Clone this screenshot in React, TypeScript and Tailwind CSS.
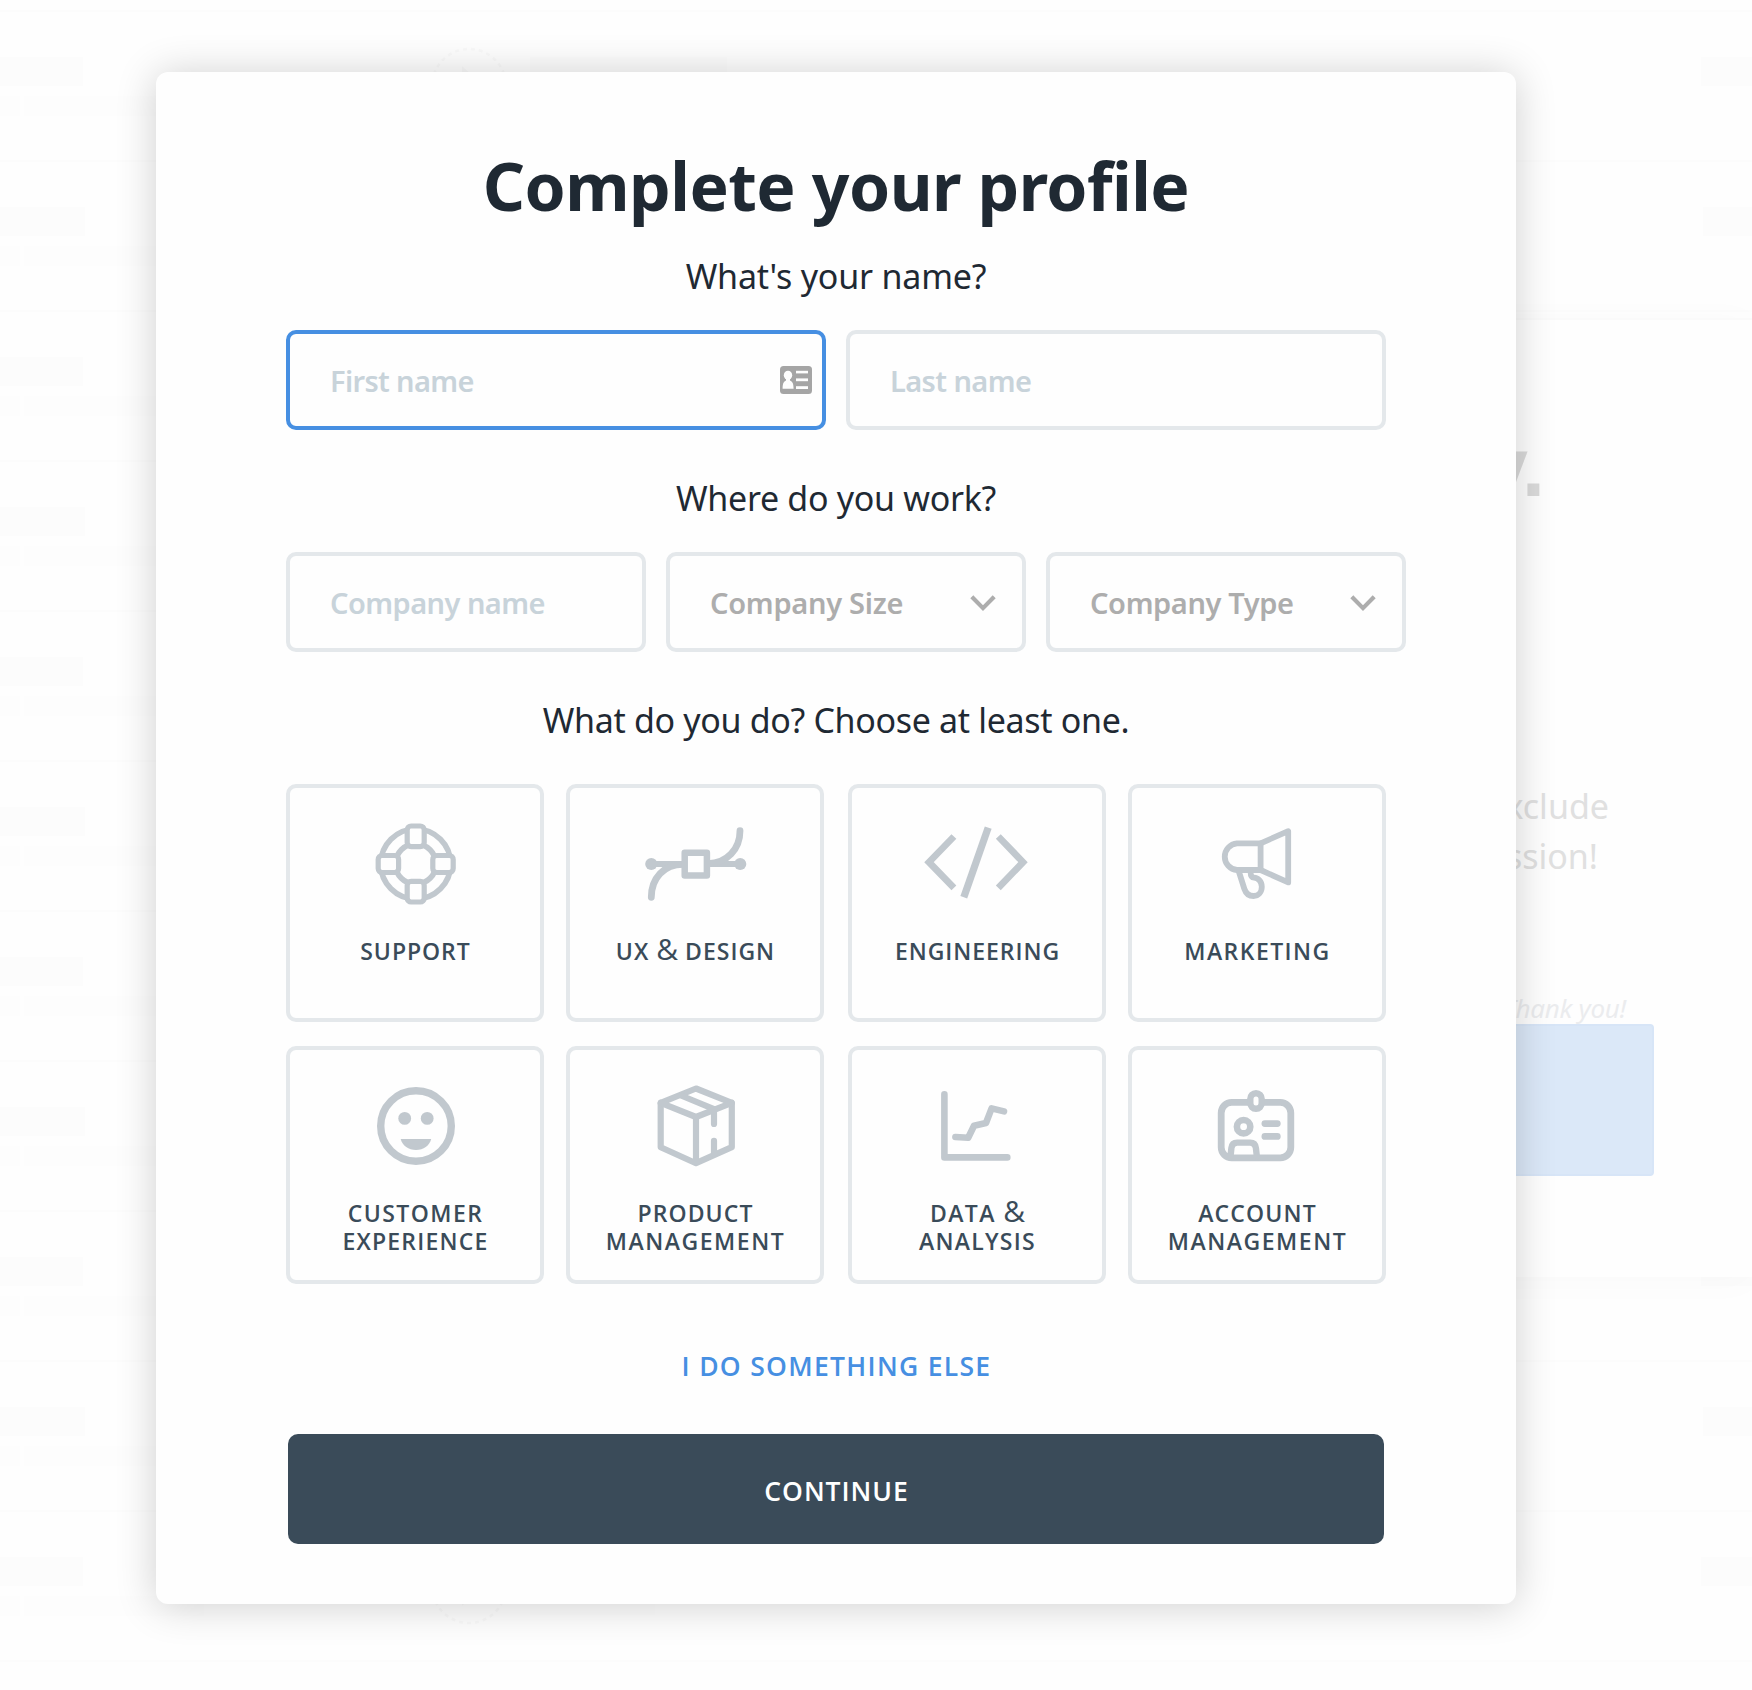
import React from "react";

const ROWS = Array.from({ length: 12 }, (_, i) => i);

/* Faded list that sits behind the dialog */
function BackdropList() {
  return (
    <div className="absolute inset-0 overflow-hidden pt-[10px]">
      {ROWS.map((i) => (
        <div key={i} className="flex h-[150px] justify-between border-t-2 border-[#fcfcfc] pt-[45px]">
          <div className="flex">
            <div className="w-[440px]">
              <div className={i % 2 ? "h-[29px] w-[85px] bg-[#fcfcfc]" : "h-[29px] w-[83px] bg-[#fcfcfc]"} />
              <div className="mt-[10px] flex gap-1">
                <div className="h-5 w-5 bg-[#fdfdfd]" />
                <div className="h-5 w-[180px] bg-[#fdfdfd]" />
              </div>
            </div>
            {(i === 0 || i === 10) && (
              <div className="-mt-[11px] flex">
                <svg className="-ml-[12px]" width="82" height="82" viewBox="0 0 82 82" fill="none">
                  <circle cx="41" cy="40" r="37" stroke="#f9f9f9" strokeWidth="2.5" strokeDasharray="4 4" />
                  <path d="M34 20 L56 40 L34 60Z" fill="#f9f9f9" />
                </svg>
                <div className={i === 0 ? "ml-5 mt-[11px] h-[29px] w-[197px] bg-[#fcfcfc]" : "ml-5 mt-[11px] h-[58px] w-[125px] bg-[#fdfdfd]"} />
              </div>
            )}
          </div>
          <div className={i % 2 ? "h-[29px] w-[49px] bg-[#fcfcfc]" : "h-[29px] w-[51px] bg-[#fcfcfc]"} />
        </div>
      ))}
    </div>
  );
}

/* Faded side panel, partly covered by the dialog */
function BackdropPanel() {
  return (
    <div className="absolute left-[1200px] top-[318px] flex h-[959px] w-[552px] flex-col items-end border-t-2 border-[#fafafa] bg-[#fefefe] pr-[98px] shadow-[0_4px_36px_rgba(0,0,0,0.025)]">
      <div className="mr-[109px] mt-[107px] font-['Liberation_Sans',sans-serif] text-[84px] font-bold leading-[80px] text-[#dadada]">
        story.
      </div>
      <div className="mr-[45px] mt-[274px] text-right text-[34px] leading-[50px] text-[#e0e0e0]">
        <div>exclude</div>
        <div className="pr-[11px]">session!</div>
      </div>
      <div className="mr-[28px] mt-[111px] text-[26px] italic leading-[32px] tracking-[-0.3px] text-[#ebecee]">Thank you!</div>
      <div className="h-[152px] w-[300px] rounded border-2 border-[#d7e5f7] bg-[#dbe8f8]" />
    </div>
  );
}

function Icon({ children }: { children: React.ReactNode }) {
  return (
    <svg
      className="shrink-0"
      width="120"
      height="96"
      viewBox="0 0 120 96"
      fill="none"
      stroke="#c1c8ce"
      strokeLinecap="round"
      strokeLinejoin="round"
    >
      {children}
    </svg>
  );
}

const SupportIcon = (
  <Icon>
    <circle cx="60.7" cy="48" r="35" strokeWidth="5.6" />
    <circle cx="60.7" cy="48" r="20.3" strokeWidth="5.6" />
    <g fill="#fefefe" strokeWidth="5.2">
      <rect x="52.2" y="10" width="17" height="20.6" rx="4" />
      <rect x="52.2" y="65.4" width="17" height="20.6" rx="4" />
      <rect x="23.2" y="39.5" width="20.4" height="17" rx="4" />
      <rect x="77.8" y="39.5" width="20.4" height="17" rx="4" />
    </g>
  </Icon>
);

const DesignIcon = (
  <Icon>
    <path d="M16.3 48H49M72 48H105.2" strokeWidth="6" />
    <path d="M16.3 81.3C16.3 62 29 48.3 48 48.3M105 14.7C105 33 92 47.3 73 47.7" strokeWidth="6.8" />
    <g fill="#c1c8ce" stroke="none">
      <circle cx="16.3" cy="48" r="6.1" />
      <circle cx="105.2" cy="48" r="6.1" />
    </g>
    <rect x="49.7" y="36.7" width="22.2" height="22.8" fill="#fefefe" strokeWidth="6.5" />
  </Icon>
);

const EngineeringIcon = (
  <Icon>
    <g strokeLinecap="butt" strokeLinejoin="miter" strokeWidth="6.8">
      <path d="M36.9 20.5L12 46.2L36.9 71.9" />
      <path d="M71.2 11.6L46.8 81.2" strokeWidth="7.2" />
      <path d="M81.3 20.5L106 46.2L81.3 71.9" />
    </g>
  </Icon>
);

const MarketingIcon = (
  <Icon>
    <g strokeWidth="5.8">
      <path d="M63.6 27.3H40A13.4 13.4 0 0 0 40 54H63.6Z" />
      <path d="M63.6 27.3L91.2 15.2V66.4L63.6 54" />
      <path d="M42 56L47.4 73C49 77.8 52.3 80 56.6 80C61.4 80 64.8 76.2 64.8 70.8C64.8 65.3 61 61.8 57 61.7C54.6 61.6 53.6 59.8 53.6 56" />
    </g>
  </Icon>
);

const CustomerIcon = (
  <Icon>
    <circle cx="61" cy="48" r="35.3" strokeWidth="7.4" />
    <g fill="#c1c8ce" stroke="none">
      <circle cx="49.7" cy="40.4" r="6.4" />
      <circle cx="72.2" cy="40.4" r="6.4" />
      <path d="M45.7 61H76.2C74.5 67.8 68.5 72 61 72S47.4 67.8 45.7 61Z" />
    </g>
  </Icon>
);

const ProductIcon = (
  <Icon>
    <g strokeWidth="6.2">
      <path d="M61 10.5L96.8 24.8V69.2L61 85.2L25.7 69.2V24.8Z" />
      <path d="M25.7 24.8L61 39L96.8 24.8M61 39V84" />
      <path d="M46 17.5L79 31.2V46M79 62.8V76" />
    </g>
  </Icon>
);

const DataIcon = (
  <Icon>
    <path d="M27.4 16.3V79.4H90.3" strokeWidth="6.6" />
    <path d="M38.4 59L51.2 59.8L57 47.7L69 45L74.6 30.4L87 33.4" strokeWidth="6.6" />
  </Icon>
);

const AccountIcon = (
  <Icon>
    <rect x="24.2" y="24.4" width="69.6" height="55.4" rx="10.5" strokeWidth="6.8" />
    <rect x="53.3" y="15.2" width="11.4" height="15.6" rx="5.7" fill="#fefefe" strokeWidth="6.4" />
    <circle cx="46.6" cy="48.7" r="6.7" strokeWidth="6.6" />
    <path d="M33.6 78L34.4 70C34.8 66.5 37 64.6 40.2 64.6H53.2C56.4 64.6 58.5 66.5 58.9 70L59.8 78" strokeWidth="6.4" />
    <path d="M67.9 45.6H80.3M67.9 58.4H80.3" strokeWidth="6.8" />
  </Icon>
);

const Amp = () => <span className="text-[30px] font-normal leading-[0] tracking-normal">&amp;</span>;

type Role = { id: string; icon: React.ReactNode; label: React.ReactNode };

const ROLES: Role[] = [
  { id: "support", icon: SupportIcon, label: <span className="tracking-[0.95px]">SUPPORT</span> },
  { id: "ux", icon: DesignIcon, label: <span className="tracking-[1px]">UX <Amp /> DESIGN</span> },
  { id: "eng", icon: EngineeringIcon, label: <span className="tracking-[0.95px]">ENGINEERING</span> },
  { id: "mkt", icon: MarketingIcon, label: <span className="tracking-[1.45px]">MARKETING</span> },
  {
    id: "cx",
    icon: CustomerIcon,
    label: (
      <>
        <span className="tracking-[1.45px]">CUSTOMER</span>
        <br />
        <span className="tracking-[1.2px]">EXPERIENCE</span>
      </>
    ),
  },
  {
    id: "pm",
    icon: ProductIcon,
    label: (
      <>
        <span className="tracking-[1.1px]">PRODUCT</span>
        <br />
        <span className="tracking-[1.55px]">MANAGEMENT</span>
      </>
    ),
  },
  {
    id: "data",
    icon: DataIcon,
    label: (
      <>
        <span className="tracking-[1.4px]">DATA <Amp /></span>
        <br />
        <span className="tracking-[1.25px]">ANALYSIS</span>
      </>
    ),
  },
  {
    id: "am",
    icon: AccountIcon,
    label: (
      <>
        <span className="tracking-[1.15px]">ACCOUNT</span>
        <br />
        <span className="tracking-[1.55px]">MANAGEMENT</span>
      </>
    ),
  },
];

function RoleCard({ role }: { role: Role }) {
  return (
    <button className="flex h-[238px] w-[258px] flex-col items-center rounded-[10px] border-4 border-[#e4e8eb] pt-7">
      {role.icon}
      <span className="mt-[25px] whitespace-nowrap pl-[1px] text-center font-['Open_Sans',sans-serif] text-[23px] font-semibold leading-[28px] text-[#3a4b59]">
        {role.label}
      </span>
    </button>
  );
}

function ContactIcon() {
  return (
    <svg className="-mt-[2px]" width="32" height="28" viewBox="0 0 32 28">
      <rect width="32" height="28" rx="3.5" fill="#a5a5a5" />
      <g fill="#fefefe">
        <ellipse cx="8" cy="9.3" rx="4.2" ry="4.6" />
        <path d="M6 12h4v2.5c2.4 1 3.6 3 3.6 8.3H2.6c0-5.3 1.1-7.3 3.4-8.3Z" />
        <rect x="16" y="4.8" width="12" height="2.6" />
        <rect x="16" y="12.4" width="12" height="2.8" />
        <rect x="16" y="20.2" width="12" height="2.8" />
      </g>
    </svg>
  );
}

function Chevron() {
  return (
    <svg width="26" height="18" viewBox="0 0 26 18" fill="none">
      <path d="M1.8 2.7L13 14.1L24.2 2.7" stroke="#adadad" strokeWidth="4.2" />
    </svg>
  );
}

const FIELD =
  "flex h-[100px] items-center justify-between rounded-[10px] border-4 pl-[40px] pt-[2px] text-[29px] font-semibold";

export default function App() {
  return (
    <div className="relative h-[1690px] w-[1752px] overflow-hidden bg-[#fefefe] pl-[156px] pt-[72px] font-['Noto_Sans',sans-serif]">
      <BackdropList />
      <BackdropPanel />

      <main className="relative flex h-[1532px] w-[1360px] flex-col rounded-[12px] bg-[#fefefe] px-[130px] pt-[73px] text-[#1f2933] shadow-[0_2px_40px_rgba(0,0,0,0.19)]">
        <h1 className="text-center text-[66px] font-bold leading-[80px] tracking-[-0.55px]">Complete your profile</h1>

        <h2 className="mt-[31px] text-center text-[34px] leading-[40px] tracking-[-0.2px]">What's your name?</h2>
        <div className="mt-[34px] flex gap-5">
          <div className={`${FIELD} w-[540px] border-[#468fe2] pr-[10px] text-[#c8d3da]`}>
            <span className="tracking-[-0.65px]">First name</span>
            <ContactIcon />
          </div>
          <div className={`${FIELD} w-[540px] border-[#e4e8eb] text-[#c8d3da]`}>
            <span className="tracking-[-0.6px]">Last name</span>
          </div>
        </div>

        <h2 className="mt-12 text-center text-[34px] leading-[40px] tracking-[-0.31px]">Where do you work?</h2>
        <div className="mt-[34px] flex gap-5">
          <div className={`${FIELD} w-[360px] shrink-0 border-[#e4e8eb] text-[#c8d3da]`}>
            <span className="tracking-[-0.55px]">Company name</span>
          </div>
          <div className={`${FIELD} w-[360px] shrink-0 border-[#e4e8eb] pr-[26px] text-[#adadad]`}>
            <span className="tracking-[-0.28px]">Company Size</span>
            <Chevron />
          </div>
          <div className={`${FIELD} w-[360px] shrink-0 border-[#e4e8eb] pr-[26px] text-[#adadad]`}>
            <span className="tracking-[-0.38px]">Company Type</span>
            <Chevron />
          </div>
        </div>

        <h2 className="mt-12 text-center text-[34px] leading-[40px] tracking-[-0.33px]">
          What do you do? Choose at least one.
        </h2>
        <div className="mt-11 grid grid-cols-[258px_260px_258px_258px] gap-x-[22px] gap-y-6">
          {ROLES.map((r) => (
            <RoleCard key={r.id} role={r} />
          ))}
        </div>

        <a className="mt-[62px] pl-[1px] text-center font-['Open_Sans',sans-serif] text-[26.5px] font-semibold leading-[40px] tracking-[1.3px] text-[#468fe2]">
          I DO SOMETHING ELSE
        </a>
        <button className="mx-[2px] mt-12 h-[110px] rounded-[10px] bg-[#3a4b59] pl-[1px] pt-[5px] font-['Open_Sans',sans-serif] text-[26.5px] font-semibold tracking-[0.95px] text-white">
          CONTINUE
        </button>
      </main>
    </div>
  );
}
